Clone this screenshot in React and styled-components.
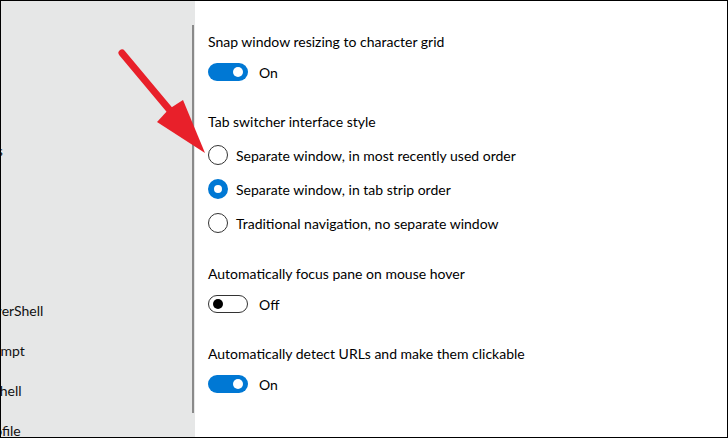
import React from 'react';
import styled, { createGlobalStyle } from 'styled-components';

const blue = '#0078d4';
const fontStack = '"Segoe UI", Lato, "Open Sans", sans-serif';

const GlobalStyle = createGlobalStyle`
    html, body {
        margin: 0;
        padding: 0;
        background: #ffffff;
    }
    body {
        font-family: ${fontStack};
        color: #000000;
    }
`;

const Page = {
    Frame: styled.div`
        position: relative;
        box-sizing: border-box;
        width: 728px;
        height: 438px;
        border: 1px solid #000000;
        display: flex;
        overflow: hidden;
        background: #ffffff;
    `,
    Sidebar: styled.nav`
        position: relative;
        width: 194px;
        flex-shrink: 0;
        background: #e6e7e7;
        overflow: hidden;
        display: flex;
    `,
    NavList: styled.ul`
        list-style: none;
        margin: 10px 0 0 -88px;
        padding: 0;
        flex: 1;
    `,
    NavItem: styled.li`
        height: 40px;
        line-height: 40px;
        font-size: 14px;
        white-space: nowrap;
        color: #111111;
    `,
    Scrollbar: styled.div`
        position: absolute;
        right: 1px;
        top: 24px;
        width: 2px;
        height: 388px;
        background: #8a8a8a;
    `,
    Content: styled.main`
        flex: 1;
        padding: 31px 0 0 13px;
        display: flex;
        flex-direction: column;
        gap: 30px;
    `
};

const Setting = {
    Group: styled.section`
        display: flex;
        flex-direction: column;
        gap: ${props => (props.radio ? '13px' : '10px')};
        margin-bottom: ${props => (props.radio ? '1px' : '0')};
    `,
    Label: styled.div`
        font-size: 14px;
        line-height: 20px;
        height: 20px;
    `,
    Row: styled.label`
        display: flex;
        align-items: center;
        height: 20px;
        font-size: 14px;
        gap: ${props => (props.radio ? '8px' : '11px')};
    `,
    Options: styled.div`
        display: flex;
        flex-direction: column;
        gap: 14px;
    `
};

const ToggleStyle = {
    Track: styled.span`
        box-sizing: border-box;
        width: 40px;
        height: 18px;
        border-radius: 9px;
        display: flex;
        align-items: center;
        justify-content: ${props => (props.on ? 'flex-end' : 'flex-start')};
        background: ${props => (props.on ? blue : '#ffffff')};
        border: ${props => (props.on ? 'none' : '1px solid #333333')};
        padding: ${props => (props.on ? '0 5px' : '0 4px')};
    `,
    Knob: styled.span`
        width: 10px;
        height: 10px;
        border-radius: 50%;
        background: ${props => (props.on ? '#ffffff' : '#000000')};
    `
};

const RadioCircle = styled.span`
    box-sizing: border-box;
    width: 20px;
    height: 20px;
    border-radius: 50%;
    flex-shrink: 0;
    border: ${props => (props.checked ? `6px solid ${blue}` : '1px solid #333333')};
    background: #ffffff;
`;

const Arrow = styled.svg`
    position: absolute;
    left: 0;
    top: 0;
    pointer-events: none;
`;

function Toggle({ on }) {
    return (
        <Setting.Row>
            <ToggleStyle.Track on={on ? 1 : 0}>
                <ToggleStyle.Knob on={on ? 1 : 0} />
            </ToggleStyle.Track>
            {on ? 'On' : 'Off'}
        </Setting.Row>
    );
}

function Radio({ checked, children }) {
    return (
        <Setting.Row radio>
            <RadioCircle checked={checked} />
            {children}
        </Setting.Row>
    );
}

const navItems = [
    'Startup',
    'Interaction',
    'Appearance',
    'Color schemes',
    'Rendering',
    'Actions',
    'Defaults',
    'Windows PowerShell',
    'Command Prompt',
    'Azure Cloud Shell',
    'Add a new profile'
];

function App() {
    return (
        <>
            <GlobalStyle />
            <Page.Frame>
                <Page.Sidebar>
                    <Page.NavList>
                        {navItems.map(item => (
                            <Page.NavItem key={item}>{item}</Page.NavItem>
                        ))}
                    </Page.NavList>
                    <Page.Scrollbar />
                </Page.Sidebar>
                <Page.Content>
                    <Setting.Group>
                        <Setting.Label>Snap window resizing to character grid</Setting.Label>
                        <Toggle on />
                    </Setting.Group>
                    <Setting.Group radio>
                        <Setting.Label>Tab switcher interface style</Setting.Label>
                        <Setting.Options>
                            <Radio>Separate window, in most recently used order</Radio>
                            <Radio checked>Separate window, in tab strip order</Radio>
                            <Radio>Traditional navigation, no separate window</Radio>
                        </Setting.Options>
                    </Setting.Group>
                    <Setting.Group>
                        <Setting.Label>Automatically focus pane on mouse hover</Setting.Label>
                        <Toggle />
                    </Setting.Group>
                    <Setting.Group>
                        <Setting.Label>Automatically detect URLs and make them clickable</Setting.Label>
                        <Toggle on />
                    </Setting.Group>
                </Page.Content>
                <Arrow width="728" height="438" viewBox="0 0 728 438">
                    <line x1="121" y1="52" x2="172" y2="113" stroke="#e8202a" strokeWidth="7" strokeLinecap="round" />
                    <polygon points="204,152 182,99 168,108 156,121" fill="#e8202a" />
                </Arrow>
            </Page.Frame>
        </>
    );
}

export default App;
